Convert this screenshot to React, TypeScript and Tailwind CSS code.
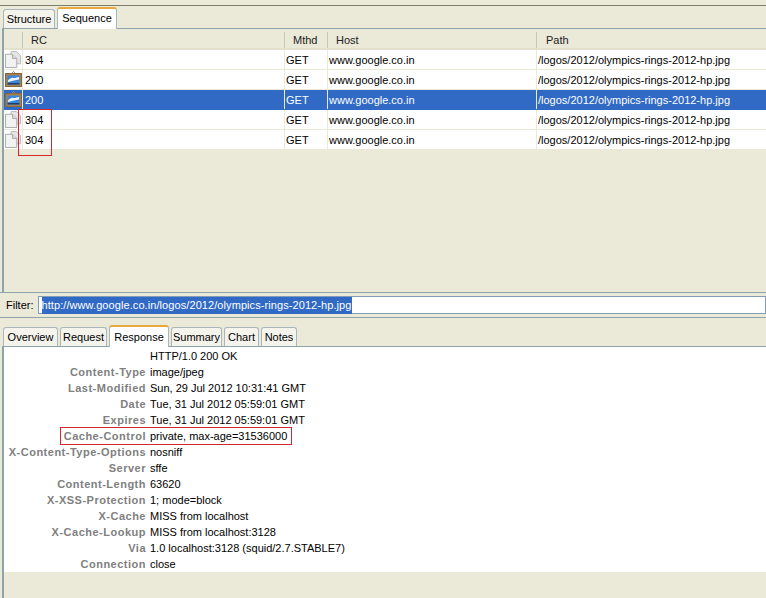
const rows = [
  { rc: "304", kind: "doc" },
  { rc: "200", kind: "pic" },
  { rc: "200", kind: "pic", selected: true },
  { rc: "304", kind: "doc" },
  { rc: "304", kind: "doc" },
];

const headers = [
  ["Content-Type", "image/jpeg"],
  ["Last-Modified", "Sun, 29 Jul 2012 10:31:41 GMT"],
  ["Date", "Tue, 31 Jul 2012 05:59:01 GMT"],
  ["Expires", "Tue, 31 Jul 2012 05:59:01 GMT"],
  ["Cache-Control", "private, max-age=31536000"],
  ["X-Content-Type-Options", "nosniff"],
  ["Server", "sffe"],
  ["Content-Length", "63620"],
  ["X-XSS-Protection", "1; mode=block"],
  ["X-Cache", "MISS from localhost"],
  ["X-Cache-Lookup", "MISS from localhost:3128"],
  ["Via", "1.0 localhost:3128 (squid/2.7.STABLE7)"],
  ["Connection", "close"],
];

function DocIcon() {
  return (
    <svg width="17" height="17" viewBox="0 0 18 18" className="shrink-0">
      <path d="M6.500 .5h5.500l4.500 4.500v8.500h-11z" fill="#e6e6e6" stroke="#b8b8b8" />
      <path d="M.5 3.500h7.500l4.500 4.500v9.500h-12z" fill="#f2f2f2" stroke="#a8a8a8" />
      <path d="M8 3.500v4.500h4.500" fill="#d8d8d8" stroke="#a8a8a8" />
    </svg>
  );
}

function PicIcon() {
  return (
    <svg width="17" height="17" viewBox="0 0 17 17" className="shrink-0">
      <path d="M6.500 2.500l2-2 2 2" fill="none" stroke="#9a8c74" />
      <rect x=".5" y="2.500" width="16" height="13" fill="#a68252" stroke="#85683e" />
      <rect x="2.500" y="4.500" width="12" height="9" fill="#3a86d8" />
      <path d="M3 9.500c2-2 3.500-3 5.500-2.500 2 .5 3-1 5.500-1v2.500c-3 .5-7 1.500-11 2.500z" fill="#eef5fc" />
      <path d="M2.500 12h12v1.500h-12z" fill="#1c3f66" />
    </svg>
  );
}

function Tab({ label, active, className }: { label: string; active?: boolean; className: string }) {
  if (active) {
    return (
      <div className={`relative z-10 -mb-px flex h-[22px] items-center justify-center rounded-t-[3px] border-x border-t-2 border-x-[#a9b7bd] border-t-[#e8a83c] bg-white text-black ${className}`}>
        {label}
      </div>
    );
  }
  return (
    <div className={`flex h-[19px] items-center justify-center rounded-t-[3px] border-x border-t border-[#a9b7bd] bg-[#f4f3ec] text-black ${className}`}>
      {label}
    </div>
  );
}

function HeadCell({ label, className }: { label: string; className: string }) {
  return <div className={`flex h-[16px] items-center border-l border-[#c9c7b4] pt-[2px] ${className}`}>{label}</div>;
}

export default function App() {
  return (
    <div className="h-[598px] w-[766px] overflow-hidden bg-[#ebe9d8] text-[11px] leading-none text-black [font-family:'Liberation_Sans',sans-serif]">
      <div className="h-[5px]" />
      <div className="h-px bg-[#7d7d68]" />

      {/* top tabs */}
      <div className="flex h-[22px] items-end gap-[2px] pl-[3px]">
        <Tab label="Structure" className="w-[52px]" />
        <Tab label="Sequence" active className="w-[60px] pb-[1px]" />
      </div>

      {/* sequence table */}
      <div className="relative ml-[2px] h-[264px] border-l-2 border-t border-[#8fa3ad]">
        <div className="flex h-[21px] items-center bg-[#ebe9d8] text-[#222] shadow-[inset_0_-2px_0_#e3e1cd]">
          <div className="w-[18px]" />
          <HeadCell label="RC" className="w-[261px] pl-[8px]" />
          <div className="w-[1px]" />
          <HeadCell label="Mthd" className="w-[43px] pl-[8px]" />
          <HeadCell label="Host" className="w-[209px] pl-[8px]" />
          <HeadCell label="Path" className="flex-1 pl-[9px]" />
        </div>
        {rows.map((r, i) => (
          <div
            key={i}
            className={`flex h-[20px] items-center border-b ${r.selected ? "border-[#316ac5] bg-[#316ac5] text-white" : "border-[#ebe9d8] bg-white text-black"}`}
          >
            <div className="flex h-full w-[18px] items-center justify-center">
              {r.kind === "doc" ? <DocIcon /> : <PicIcon />}
            </div>
            <div className="flex h-full w-[262px] items-center border-l border-[#ebe9d8] pl-[2px] pt-[2px]">{r.rc}</div>
            <div className="flex h-full w-[43px] items-center border-l border-[#ebe9d8] pl-[1px] pt-[2px]">GET</div>
            <div className="flex h-full w-[209px] items-center border-l border-[#ebe9d8] pl-[1px] pt-[2px]">www.google.co.in</div>
            <div className="flex h-full flex-1 items-center border-l border-[#ebe9d8] pl-[1px] pt-[2px]">/logos/2012/olympics-rings-2012-hp.jpg</div>
          </div>
        ))}
        {/* annotation around the two 304 rows */}
        <div className="absolute left-[14px] top-[80px] h-[47px] w-[34px] border border-[#d8262c]" />
      </div>

      {/* filter */}
      <div className="h-px bg-[#8fa3ad]" />
      <div className="flex h-[24px] items-center gap-[4px] pl-[6px]">
        <span>Filter:</span>
        <div className="flex h-[18px] flex-1 items-center border border-[#7f9db9] bg-white pl-[3px]">
          <span className="bg-[#316ac5] py-[3px] tracking-[0.08px] text-white">http://www.google.co.in/logos/2012/olympics-rings-2012-hp.jpg</span>
        </div>
      </div>
      <div className="h-px bg-[#8fa3ad]" />
      <div className="h-[6px]" />

      {/* bottom tabs */}
      <div className="flex h-[22px] items-end gap-[2px] pl-[3px]">
        <Tab label="Overview" className="w-[55px]" />
        <Tab label="Request" className="w-[47px]" />
        <Tab label="Response" active className="w-[60px]" />
        <Tab label="Summary" className="w-[51px]" />
        <Tab label="Chart" className="w-[35px]" />
        <Tab label="Notes" className="w-[36px]" />
      </div>

      {/* response headers */}
      <div className="relative ml-[2px] h-[252px] border-l-2 border-t border-[#8fa3ad]">
        <div className="bg-white pb-[1px]">
          <div className="flex h-[16px] items-center pl-[146px] pt-[2px]">HTTP/1.0 200 OK</div>
          {headers.map(([k, v]) => (
            <div key={k} className="flex h-[16px] items-center pt-[2px]">
              <div className="w-[142px] shrink-0 text-right font-bold tracking-[0.5px] text-[#808080]">{k}</div>
              <div className="pl-[4px]">{v}</div>
            </div>
          ))}
        </div>
        {/* annotation around Cache-Control */}
        <div className="absolute left-[56px] top-[80px] h-[18px] w-[232px] border border-[#d8262c]" />
      </div>
    </div>
  );
}
